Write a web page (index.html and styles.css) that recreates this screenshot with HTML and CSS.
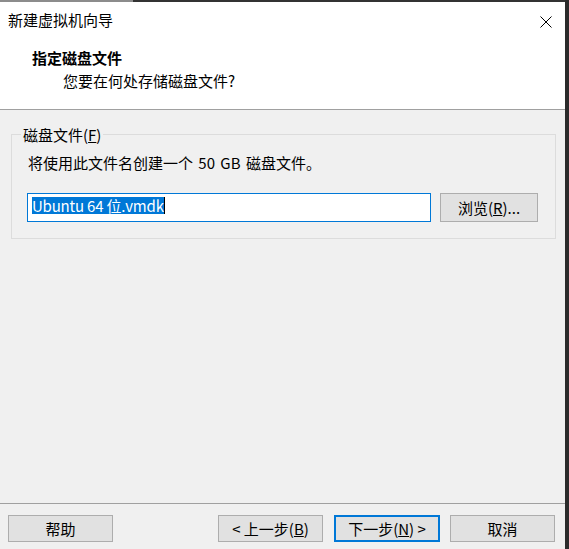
FILE: index.html
```html
<!DOCTYPE html>
<html lang="zh-CN">
<head>
<meta charset="UTF-8">
<title>新建虚拟机向导</title>
<link rel="stylesheet" href="styles.css">
</head>
<body>
<div class="edge"></div>
<div class="window">
  <div class="header">
    <div class="titlebar">
      <span class="title">新建虚拟机向导</span>
      <svg class="close" width="12" height="12" viewBox="0 0 12 12">
        <path d="M0.5 0.5 L11.5 11.5 M11.5 0.5 L0.5 11.5" stroke="#000" stroke-width="1" fill="none"/>
      </svg>
    </div>
    <div class="heading">指定磁盘文件</div>
    <div class="subheading">您要在何处存储磁盘文件?</div>
  </div>

  <div class="main">
    <fieldset class="group">
      <legend>磁盘文件(<u>F</u>)</legend>
      <p class="hint">将使用此文件名创建一个 50 GB 磁盘文件。</p>
      <div class="file-row">
        <div class="textbox"><span class="selected">Ubuntu 64 位.vmdk</span><span class="caret"></span></div>
        <div class="button browse">浏览(<u>R</u>)...</div>
      </div>
    </fieldset>
  </div>

  <div class="footer">
    <div class="button help">帮助</div>
    <div class="button">&lt; 上一步(<u>B</u>)</div>
    <div class="button default">下一步(<u>N</u>) &gt;</div>
    <div class="button">取消</div>
  </div>
</div>
</body>
</html>
```

FILE: styles.css
```css
body {
  margin: 0;
  width: 569px;
  height: 549px;
  background-color: #2b2b2b;
  font-family: "Noto Sans CJK SC", "Noto Sans", sans-serif;
  font-size: 15px;
  color: #000;
  overflow: hidden;
}

.edge {
  height: 2px;
  width: 565px;
  background: linear-gradient(to right, #8c8c8c 0, #8c8c8c 133px, #333333 133px);
}

.window {
  width: 565px;
  height: 547px;
  background-color: #f0f0f0;
  display: flex;
  flex-direction: column;
}

.header {
  background-color: #ffffff;
  border-bottom: 1px solid #a0a0a0;
  padding-bottom: 20px;
}

.titlebar {
  display: flex;
  align-items: center;
  justify-content: space-between;
  padding: 9px 13px 0 8px;
  height: 17px;
  line-height: 17px;
}

.close {
  display: block;
  margin-top: 5px;
}

.heading {
  margin-top: 21px;
  padding-left: 32px;
  font-weight: bold;
  line-height: 17px;
}

.subheading {
  margin-top: 6px;
  padding-left: 63px;
  line-height: 17px;
}

.main {
  flex: 1;
  padding: 16px 0 0 11px;
}

.group {
  margin: 0;
  width: 545px;
  box-sizing: border-box;
  border: 1px solid #dcdcdc;
  padding: 0 0 16px 0;
}

.group legend {
  margin-left: 9px;
  padding: 0 2px;
  line-height: 17px;
}

.hint {
  margin: 11px 0 0 16px;
  line-height: 17px;
  word-spacing: 2px;
}

.file-row {
  display: flex;
  margin: 22px 0 0 15px;
}

.textbox {
  width: 404px;
  height: 29px;
  box-sizing: border-box;
  border: 1px solid #0078d7;
  background-color: #ffffff;
  padding: 3px 0 0 4px;
  display: flex;
  align-items: flex-start;
}

.selected {
  display: inline-block;
  height: 17px;
  line-height: 17px;
  background-color: #0078d7;
  color: #ffffff;
  letter-spacing: -0.2px;
}

.caret {
  display: inline-block;
  width: 1px;
  height: 17px;
  background-color: #000;
}

.button {
  box-sizing: border-box;
  height: 29px;
  background-color: #e1e1e1;
  border: 1px solid #adadad;
  display: flex;
  align-items: center;
  justify-content: center;
  line-height: 17px;
}

.browse {
  width: 98px;
  margin-left: 9px;
}

.footer {
  border-top: 1px solid #a0a0a0;
  padding: 11px 10px 7px 8px;
  display: flex;
  gap: 10px;
}

.footer .button {
  width: 105px;
  height: 27px;
}

.footer .help {
  margin-right: auto;
}

.footer .default {
  width: 106px;
  border: 2px solid #0078d7;
  margin-left: 1px;
}
```
